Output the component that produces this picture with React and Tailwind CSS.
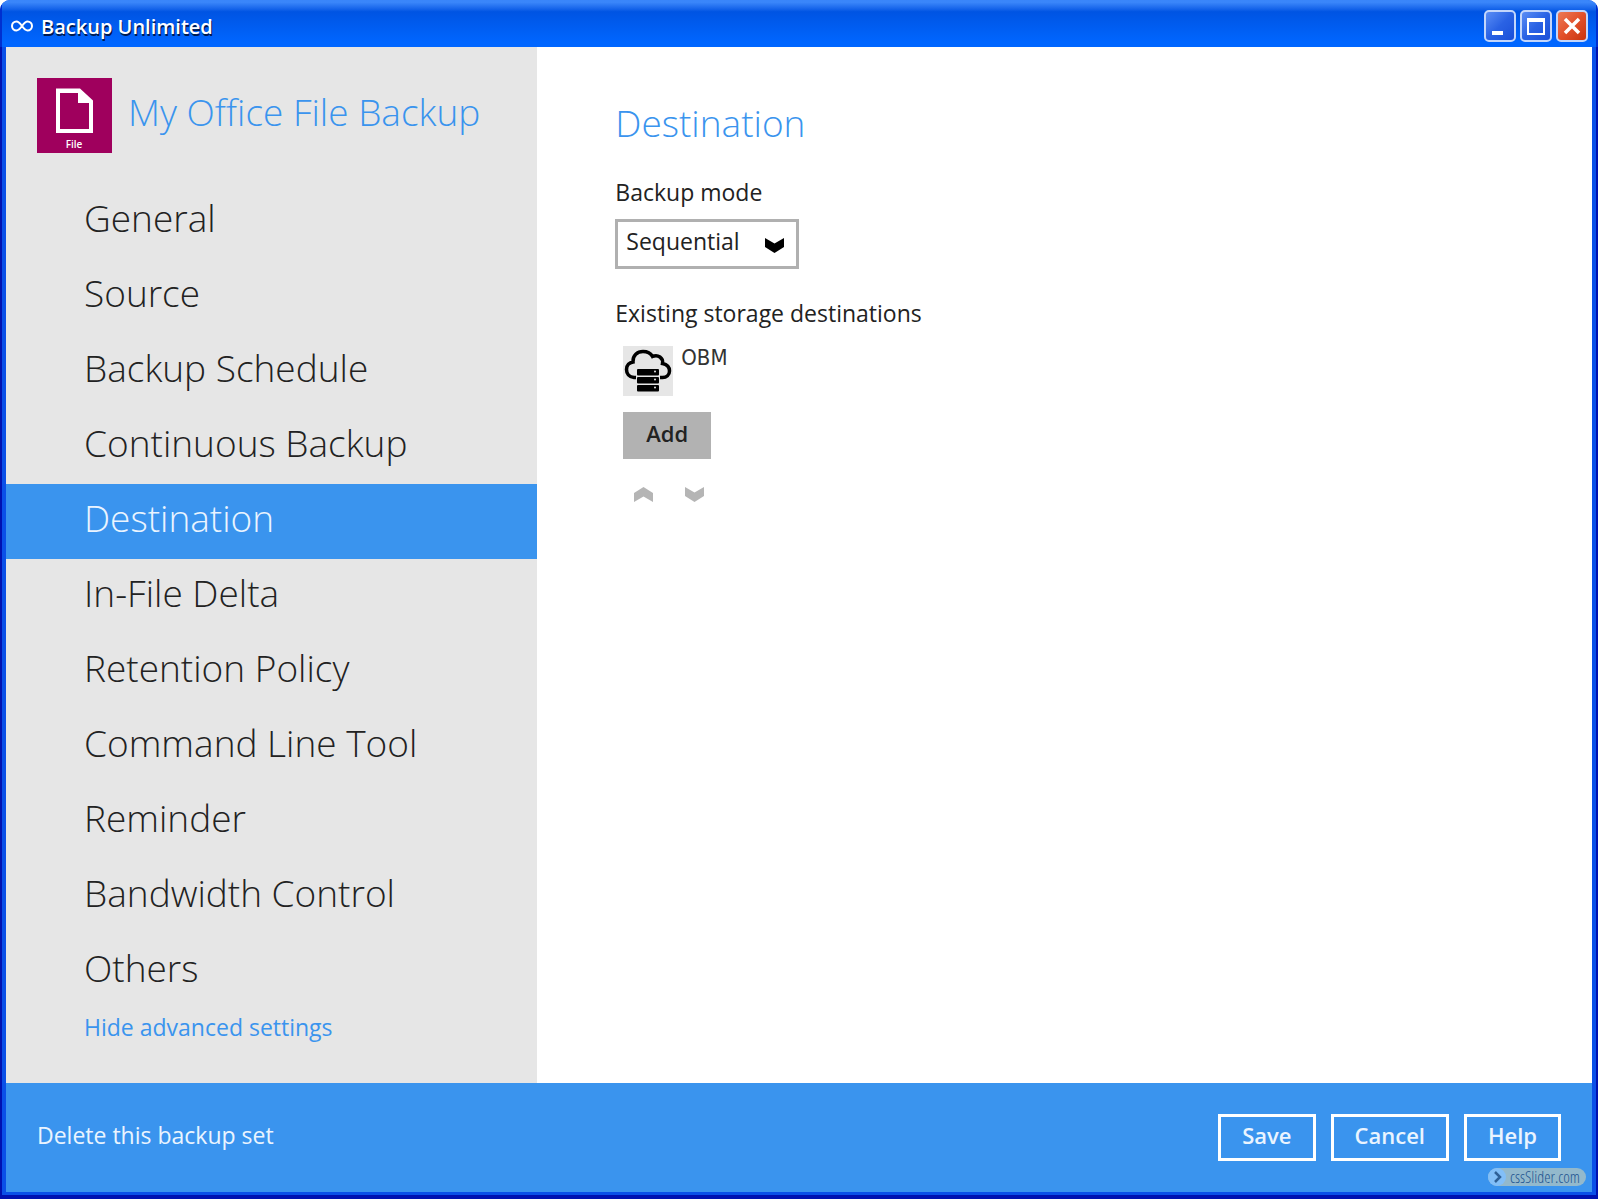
import React, { useState } from 'react';

const NAV_ITEMS = [
  'General',
  'Source',
  'Backup Schedule',
  'Continuous Backup',
  'Destination',
  'In-File Delta',
  'Retention Policy',
  'Command Line Tool',
  'Reminder',
  'Bandwidth Control',
  'Others',
];

const FileIcon = () => (
  <svg viewBox="0 0 75 75" className="w-[75px] h-[75px] shrink-0" aria-label="File">
    <rect width="75" height="75" fill="#9f005d" />
    <path fillRule="evenodd" fill="#fff" d="M19 10.500H43L56 22.500V55H19ZM23 15V51H52V25H41V15Z" />
    <text x="37" y="70" textAnchor="middle" fontSize="10" fontWeight="600" fill="#fff" fontFamily="Open Sans, sans-serif">File</text>
  </svg>
);

const CloudIcon = () => (
  <svg viewBox="0 0 50 50" className="w-[50px] h-[50px] bg-[#e6e6e6]" aria-hidden="true">
    <path
      d="M13 31.500H11C6 31 3.500 27.500 3.500 23.500C3.500 19 6.500 16.500 10 16C9.500 9.500 14.500 5.500 20 5.500C24.500 5.500 27.500 7 29.500 10.500C35 8 40.500 12 39.500 17.500C44.500 18.500 46.500 21.500 46.500 25C46.500 29 43.500 31.500 39.500 31.500H37"
      fill="none"
      stroke="#000"
      strokeWidth="3.500"
    />
    {[23, 31, 39].map((y) => (
      <g key={y}>
        <rect x="14" y={y} width="22" height="6.500" rx="1" fill="#000" />
        <circle cx="32" cy={y + 2.500} r="1" fill="#e6e6e6" />
      </g>
    ))}
  </svg>
);

const Chevron = ({ up, className }) => (
  <svg viewBox="0 0 19 15" className={className} aria-hidden="true">
    <path d={up ? 'M0 6L9.500 0L19 6V15L9.500 9.500L0 15Z' : 'M0 0L9.500 5.500L19 0V9L9.500 15L0 9Z'} fill="currentColor" />
  </svg>
);

const WindowButton = ({ label, close, children }) => (
  <button
    type="button"
    aria-label={label}
    className={`w-8 h-8 rounded-[5px] border-2 border-[#c3d6fb] flex items-center justify-center ${
      close
        ? 'bg-linear-to-br from-[#ec7a55] via-[#e2502a] to-[#c8330c]'
        : 'bg-linear-to-br from-[#5a8df5] via-[#2a62e4] to-[#1a4fd8]'
    }`}
  >
    <svg viewBox="0 0 28 28" className="w-7 h-7 shrink-0">{children}</svg>
  </button>
);

const FooterButton = ({ children }) => (
  <button type="button" className="h-[47px] px-[21px] pb-1 border-3 border-white text-[22px] font-semibold text-[#eaf4ff]">
    {children}
  </button>
);

const App = () => {
  const [active, setActive] = useState('Destination');
  const [mode, setMode] = useState('Sequential');

  return (
    <div className="min-h-screen flex bg-white pr-0.5 pb-px font-['Open_Sans',sans-serif] text-[#222]">
      <div className="grow flex flex-col rounded-t-[10px] overflow-hidden bg-[#0a50e8]">
        {/* Title bar */}
        <header className="h-[47px] shrink-0 flex items-center justify-between pl-[9px] pr-2 pt-1 border-x-2 border-[#0030d0] bg-linear-to-b from-[#3a86fa] from-5% via-[#0054e3] via-25% to-[#0066ff] to-90%">
          <div className="flex items-center gap-2">
            <svg viewBox="0 0 22 12" className="w-[22px] h-3" aria-hidden="true">
              <path d="M11 6C8.500 2.500 7.500 1.500 5.500 1.500A4.500 4.500 0 0 0 5.500 10.500C7.500 10.500 8.500 9.500 11 6S14.500 1.500 16.500 1.500A4.500 4.500 0 0 1 16.500 10.500C14.500 10.500 13.500 9.500 11 6Z" fill="none" stroke="#fff" strokeWidth="2" />
            </svg>
            <h1 className="pt-0.5 text-xl font-semibold text-white [text-shadow:1px_2px_0_#001a50]">Backup Unlimited</h1>
          </div>
          <div className="flex gap-1">
            <WindowButton label="Minimize">
              <rect x="6" y="19" width="11" height="4" fill="#fff" />
            </WindowButton>
            <WindowButton label="Maximize">
              <path fillRule="evenodd" fill="#fff" d="M5 6H23V23H5ZM7 10V21H21V10Z" />
            </WindowButton>
            <WindowButton label="Close" close>
              <path d="M7 7L21 21M21 7L7 21" stroke="#fff" strokeWidth="3.500" />
            </WindowButton>
          </div>
        </header>

        <div className="grow flex flex-col border-x-2 border-b-4 border-[#0012b0]">
          <div className="grow flex flex-col border-x-4 border-b-3 border-[#0a50e8]">
            <div className="grow flex bg-white">
              <aside className="w-[33.500%] shrink-0 flex flex-col bg-[#e6e6e6]">
                <div className="flex items-center gap-4 pt-[31px] pl-[31px] pb-[31px]">
                  <FileIcon />
                  <h2 className="text-[37px] leading-[54px] pb-2 font-light text-[#3a94ee] whitespace-nowrap">My Office File Backup</h2>
                </div>
                <nav className="flex flex-col">
                  {NAV_ITEMS.map((item) => (
                    <button
                      key={item}
                      type="button"
                      onClick={() => setActive(item)}
                      className={`h-[75px] pl-[78px] pb-2 text-left text-[37px] font-light ${
                        item === active ? 'bg-[#3a94ee] text-[#eaf4ff]' : ''
                      }`}
                    >
                      {item}
                    </button>
                  ))}
                </nav>
                <a href="#" className="self-start pl-[78px] pt-0.5 text-[23px] leading-8 text-[#3a94ee]">Hide advanced settings</a>
              </aside>

              <main className="grow pt-[49px] pl-[78px]">
                <h2 className="text-[37px] leading-[54px] font-light text-[#3a94ee]">Destination</h2>
                <label htmlFor="mode" className="block mt-[26px] text-[23px] leading-8">Backup mode</label>
                <div className="relative w-[184px] mt-[11px]">
                  <select
                    id="mode"
                    value={mode}
                    onChange={(e) => setMode(e.target.value)}
                    className="appearance-none w-full h-[50px] pl-2 pb-1.5 bg-white border-3 border-[#b0b0b0] text-[23px]"
                  >
                    <option>Sequential</option>
                    <option>Concurrent</option>
                  </select>
                  <Chevron className="absolute right-[15px] top-[19px] w-[19px] h-[15px] text-black pointer-events-none" />
                </div>

                <h3 className="mt-7 text-[23px] leading-8">Existing storage destinations</h3>
                <div className="pl-2 mt-[17px]">
                  <div className="flex items-start gap-2">
                    <CloudIcon />
                    <span className="text-[22px] leading-6 font-['DejaVu_Sans_Condensed','DejaVu_Sans',sans-serif] text-[#333]">OBM</span>
                  </div>
                  <button type="button" className="mt-4 h-[47px] px-[23px] pb-1 bg-[#b2b2b2] text-[22px] font-semibold">Add</button>
                  <div className="flex gap-8 mt-7 pl-[11px] text-[#b5b5b5]">
                    <button type="button" aria-label="Move up"><Chevron up className="w-[19px] h-[15px]" /></button>
                    <button type="button" aria-label="Move down"><Chevron className="w-[19px] h-[15px]" /></button>
                  </div>
                </div>
              </main>
            </div>

            <footer className="relative h-[109px] shrink-0 flex items-center justify-between px-[31px] bg-[#3a94ee] text-[#eaf4ff]">
              <button type="button" className="text-[23px] pb-1">Delete this backup set</button>
              <div className="flex gap-[15px]">
                <FooterButton>Save</FooterButton>
                <FooterButton>Cancel</FooterButton>
                <FooterButton>Help</FooterButton>
              </div>
              <a href="#" className="absolute right-[6px] bottom-[6px] h-[18px] flex items-center gap-1 pr-1.5 rounded-full bg-[#93b9cc] text-[#1f5590] font-['Open_Sans_Condensed_Light','Open_Sans_Condensed','Open_Sans',sans-serif] font-light text-base leading-[18px]">
                <svg viewBox="0 0 18 18" className="w-[18px] h-[18px] shrink-0" aria-hidden="true">
                  <circle cx="9" cy="9" r="9" fill="#82bff8" />
                  <path d="M7 4L12 9L7 14" fill="none" stroke="#2f6197" strokeWidth="2.500" />
                </svg>
                cssSlider.com
              </a>
            </footer>
          </div>
        </div>
      </div>
    </div>
  );
};

export default App;
